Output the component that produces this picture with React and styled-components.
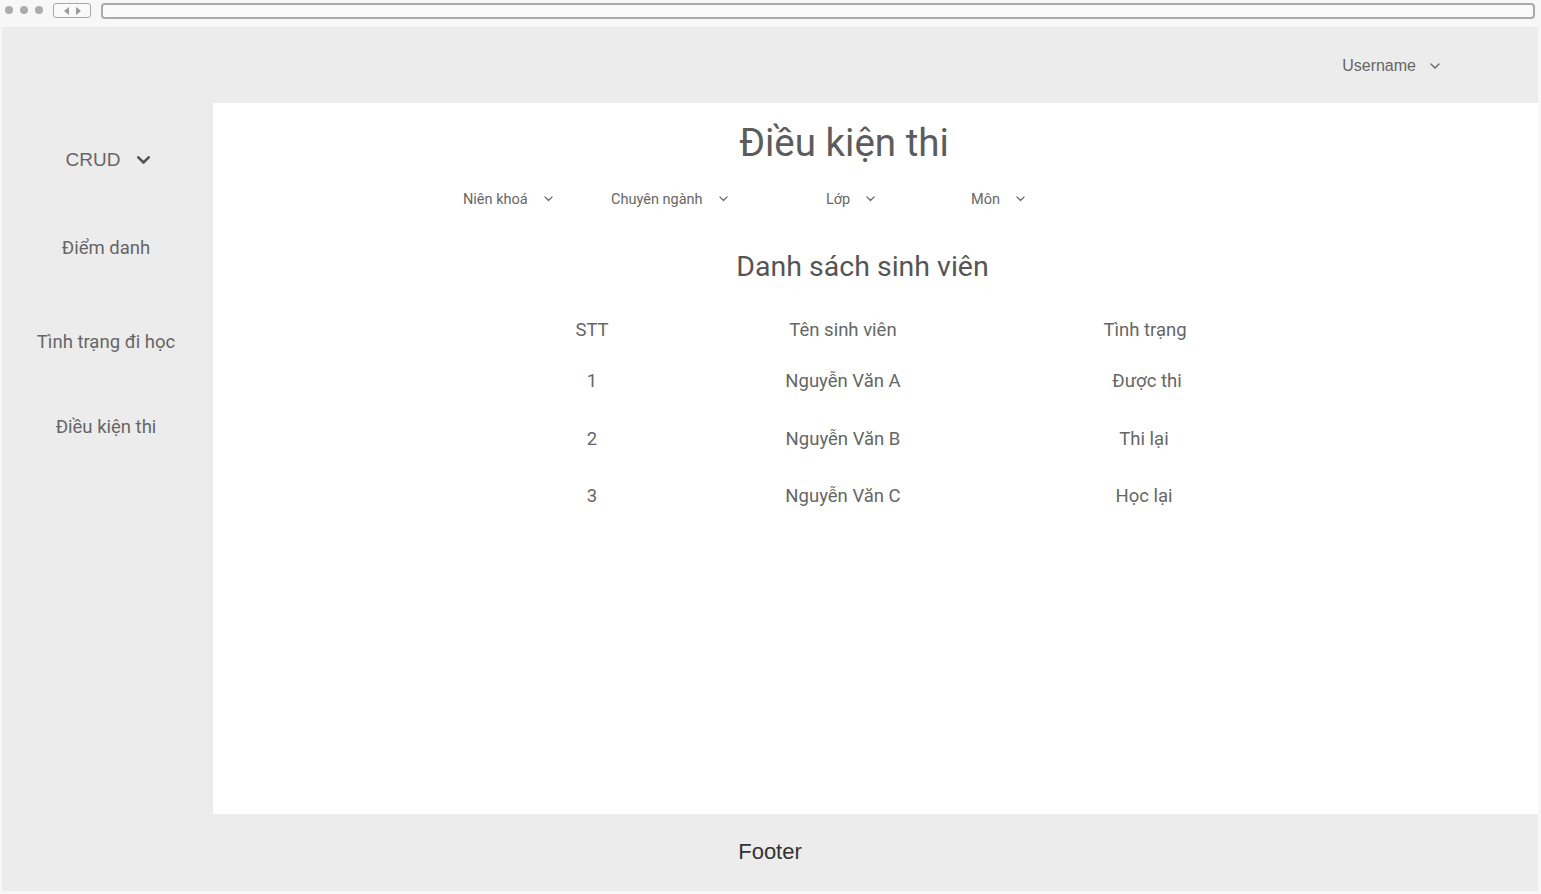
import React from "react";
import styled, { createGlobalStyle } from "styled-components";

const Global = createGlobalStyle`
  html, body { margin: 0; padding: 0; background: #f7f7f7; }
  body { font-family: "Liberation Sans", Arial, sans-serif; }
  #root { width: 1541px; height: 894px; }
`;

const Window = styled.div`
  width: 1541px;
  height: 894px;
  display: flex;
  flex-direction: column;
  background: #f7f7f7;
`;

const Chrome = styled.div`
  height: 27px;
  display: flex;
  align-items: flex-start;
  padding: 3px 6px 0 5px;
  box-sizing: border-box;
`;

const Dots = styled.div`
  display: flex;
  gap: 7px;
  margin-top: 3px;
`;

const Dot = styled.span`
  width: 8px;
  height: 8px;
  border-radius: 50%;
  background: #acacac;
`;

const NavBox = styled.div`
  margin-left: 10px;
  width: 38px;
  height: 15px;
  box-sizing: border-box;
  border: 1.5px solid #a8a8a8;
  border-radius: 3px;
  display: flex;
  align-items: center;
  justify-content: center;
  gap: 7px;
  background: #fafafa;
`;

const AddressBar = styled.div`
  margin-left: 10px;
  flex: 1;
  height: 16px;
  box-sizing: border-box;
  border: 2px solid #aaaaaa;
  border-radius: 4px;
  background: #fafafa;
`;

const Frame = styled.div`
  margin: 0 3px 0 2px;
  height: 864px;
  background: #ececec;
  display: grid;
  grid-template-columns: 211px 1fr;
  grid-template-rows: 76px 711px 77px;
`;

const Header = styled.header`
  grid-column: 1 / 3;
  display: flex;
  align-items: center;
  justify-content: flex-end;
  padding-right: 98px;
  padding-top: 1px;
`;

const Dropdown = styled.div`
  display: flex;
  align-items: center;
  gap: ${(p) => p.$gap || 14}px;
  color: ${(p) => p.$color || "#666"};
  font-family: ${(p) => p.$font || '"Liberation Sans", Arial, sans-serif'};
  font-size: ${(p) => p.$size || 16}px;
`;

const Sidebar = styled.nav`
  display: flex;
  flex-direction: column;
  align-items: center;
  padding-top: 46px;
  padding-right: 3px;
`;

const SideItem = styled.div`
  font-family: Roboto, "Noto Sans", sans-serif;
  font-size: 18.5px;
  color: #666;
  margin-top: ${(p) => p.$mt}px;
  margin-left: ${(p) => p.$ml || 0}px;
  line-height: 24px;
`;

const Main = styled.main`
  background: #fff;
  display: flex;
  flex-direction: column;
`;

const Title = styled.h1`
  margin: 17px 63px 0 0;
  text-align: center;
  font-family: Roboto, sans-serif;
  font-weight: 400;
  font-size: 38.5px;
  line-height: 46px;
  color: #5c5c5c;
`;

const Filters = styled.div`
  display: flex;
  margin: 21px 0 0 250px;
  height: 24px;
  align-items: center;
`;

const FilterCell = styled.div`
  width: ${(p) => p.$w}px;
`;

const SubTitle = styled.h2`
  margin: 38px 26px 0 0;
  text-align: center;
  font-family: Roboto, sans-serif;
  font-weight: 400;
  font-size: 28.5px;
  line-height: 36px;
  color: #555;
`;

const Table = styled.div`
  margin: 33px 0 0 254px;
  display: grid;
  grid-template-columns: 250px 252px 352px;
  grid-template-rows: 51px;
  grid-auto-rows: 57.5px;
  font-family: Roboto, sans-serif;
  font-size: 18.5px;
  color: #666;
`;

const HeadCell = styled.div`
  text-align: center;
  line-height: 24px;
`;

const Cell = styled.div`
  text-align: center;
  line-height: 24px;
  margin-left: ${(p) => p.$dx || 0}px;
`;

const Footer = styled.footer`
  grid-column: 1 / 3;
  display: flex;
  align-items: center;
  justify-content: center;
  font-family: "Liberation Sans", Arial, sans-serif;
  font-size: 22px;
  color: #333;
  padding-bottom: 1px;
`;

const Chevron = ({ size = 10, width = 1.5, color = "#666" }) => (
  <svg width={size} height={size * 0.6} viewBox="0 0 10 6" fill="none">
    <path d="M1 1 L5 5 L9 1" stroke={color} strokeWidth={width} strokeLinecap="round" strokeLinejoin="round" />
  </svg>
);

const Tri = ({ dir }) => (
  <svg width="5" height="8" viewBox="0 0 5 8">
    <path d={dir === "l" ? "M5 0 L0 4 L5 8 Z" : "M0 0 L5 4 L0 8 Z"} fill="#9a9a9a" />
  </svg>
);

const filters = [
  { label: "Niên khoá", w: 148 },
  { label: "Chuyên ngành", w: 215 },
  { label: "Lớp", w: 145 },
  { label: "Môn", w: 80 },
];

const rows = [
  ["1", "Nguyễn Văn A", "Được thi", 2],
  ["2", "Nguyễn Văn B", "Thi lại", -1],
  ["3", "Nguyễn Văn C", "Học lại", -1],
];

export default function App() {
  return (
    <>
      <Global />
      <Window>
        <Chrome>
          <Dots>
            <Dot />
            <Dot />
            <Dot />
          </Dots>
          <NavBox>
            <Tri dir="l" />
            <Tri dir="r" />
          </NavBox>
          <AddressBar />
        </Chrome>
        <Frame>
          <Header>
            <Dropdown $gap={14}>
              Username
              <Chevron size={10} width={1.4} />
            </Dropdown>
          </Header>
          <Sidebar>
            <Dropdown $size={19} $gap={17} style={{ marginLeft: 4 }}>
              CRUD
              <Chevron size={13} width={2} color="#555" />
            </Dropdown>
            <SideItem $mt={65}>Điểm danh</SideItem>
            <SideItem $mt={70}>Tình trạng đi học</SideItem>
            <SideItem $mt={61}>Điều kiện thi</SideItem>
          </Sidebar>
          <Main>
            <Title>Điều kiện thi</Title>
            <Filters>
              {filters.map((f) => (
                <FilterCell key={f.label} $w={f.w}>
                  <Dropdown $font="Roboto, sans-serif" $size={14.5} $gap={16}>
                    {f.label}
                    <Chevron size={9} width={1.4} />
                  </Dropdown>
                </FilterCell>
              ))}
            </Filters>
            <SubTitle>Danh sách sinh viên</SubTitle>
            <Table>
              <HeadCell>STT</HeadCell>
              <HeadCell>Tên sinh viên</HeadCell>
              <HeadCell>Tình trạng</HeadCell>
              {rows.map((r) => (
                <React.Fragment key={r[0]}>
                  <Cell>{r[0]}</Cell>
                  <Cell>{r[1]}</Cell>
                  <Cell $dx={r[3] * 2}>{r[2]}</Cell>
                </React.Fragment>
              ))}
            </Table>
          </Main>
          <Footer>Footer</Footer>
        </Frame>
      </Window>
    </>
  );
}
